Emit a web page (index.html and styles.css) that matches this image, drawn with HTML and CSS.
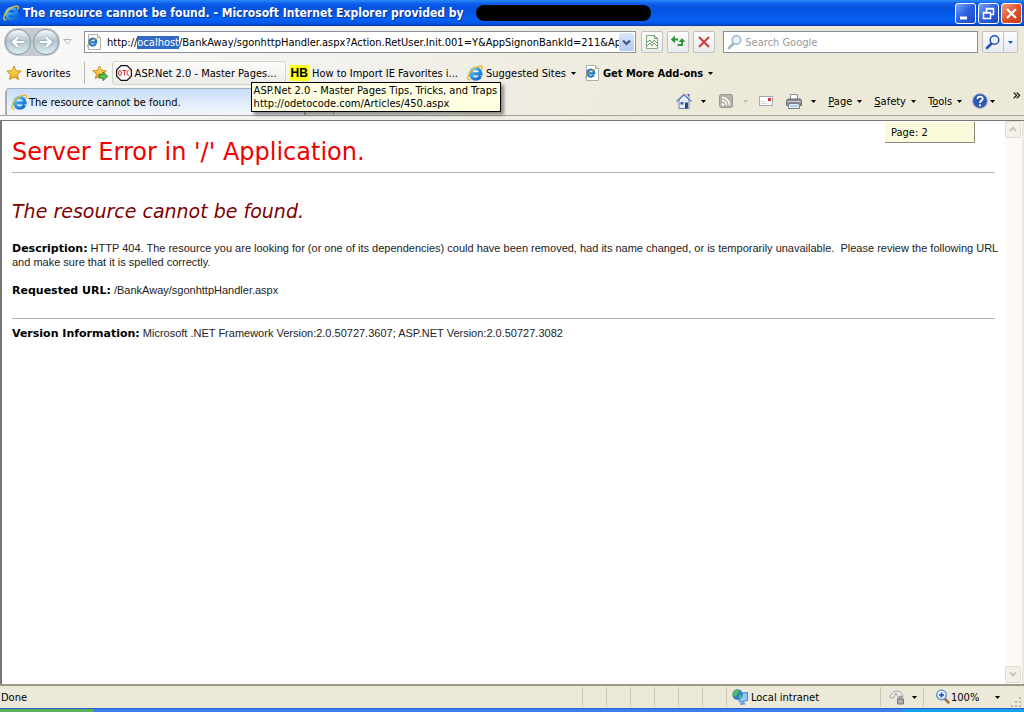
FILE: index.html
```html
<!DOCTYPE html>
<html lang="en">
<head>
    <meta charset="UTF-8">
    <meta name="viewport" content="width=device-width, initial-scale=1.0">
    <title>The resource cannot be found.</title>
    <link rel="stylesheet" href="styles.css">
</head>
<body>
    <!-- Shared icons -->
    <svg class="sprite" aria-hidden="true">
        <linearGradient id="blue" x1="0" y1="0" x2="1" y2="1">
            <stop offset="0" stop-color="#6fd0fc"/>
            <stop offset="0.500" stop-color="#2c93e6"/>
            <stop offset="1" stop-color="#1264c8"/>
        </linearGradient>
        <linearGradient id="gold" x1="0" y1="0" x2="0" y2="1">
            <stop offset="0" stop-color="#ffe96a"/>
            <stop offset="1" stop-color="#eda41c"/>
        </linearGradient>
        <linearGradient id="glass" x1="0" y1="0" x2="0" y2="1">
            <stop offset="0" stop-color="#ffffff"/>
            <stop offset="1" stop-color="#cfe8fb"/>
        </linearGradient>
        <symbol id="ie" viewBox="0 0 16 16">
            <path d="M13.500 11A5.300 5.300 0 1 1 14 8.800H5" fill="none" stroke="url(#blue)" stroke-width="3.200"/>
            <path d="M3.500 14.800C-1 15.500.2 9.500 5.500 4.800 9.500 1.200 15 .2 15.300 2.200c.1.800-.2 1.500-.6 2.200" fill="none" stroke="#f2b824" stroke-width="1.400"/>
        </symbol>
        <symbol id="page-ie" viewBox="0 0 16 16">
            <path d="M2.500.5h9l3 3v12h-12z" fill="#fff" stroke="#b0b0aa"/>
            <path d="M11.500.5v3h3" fill="#e4e4e0" stroke="#b0b0aa"/>
            <path d="M9.800 10A3.500 3.500 0 1 1 10.300 8.400H4" fill="none" stroke="#1f78d0" stroke-width="2.200"/>
            <path d="M2 13.300c-1.700-1 1.500-5.500 4.500-7.300 2.500-1.500 4.800-2 4.500-.5" fill="none" stroke="#e0a528"/>
        </symbol>
        <symbol id="star" viewBox="0 0 16 16">
            <path d="M8 1l2.100 4.700 5.100.5-3.900 3.400 1.200 5L8 12l-4.500 2.600 1.200-5L.8 6.200l5.100-.5z" fill="url(#gold)" stroke="#c98e1c"/>
        </symbol>
        <symbol id="lens" viewBox="0 0 16 16">
            <path d="M6.500 9.500L2 14" stroke="currentColor" stroke-width="2.500" stroke-linecap="round"/>
            <circle cx="9.500" cy="6" r="4.300" fill="#e8f4ff" stroke="currentColor" stroke-width="1.500"/>
        </symbol>
        <symbol id="down" viewBox="0 0 5 3">
            <path d="M0 0h5L2.500 3z" fill="currentColor"/>
        </symbol>
    </svg>

    <header class="titlebar">
        <svg class="icon"><use href="#ie"/></svg>
        <h1 class="window-title">The resource cannot be found. - Microsoft Internet Explorer provided by</h1>
        <span class="redacted"></span>
        <div class="window-buttons">
            <button class="window-button" aria-label="Minimize">
                <svg viewBox="0 0 19 19"><path d="M4 14h7" stroke="#fff" stroke-width="3"/></svg>
            </button>
            <button class="window-button" aria-label="Restore">
                <svg viewBox="0 0 19 19"><path d="M7.500 8V4.500h7v6H12M7 5h8" fill="none" stroke="#fff" stroke-width="1.500"/><path d="M4.500 8.500h7v6h-7zM4 9h8" fill="none" stroke="#fff" stroke-width="1.500"/></svg>
            </button>
            <button class="window-button close" aria-label="Close">
                <svg viewBox="0 0 19 19"><path d="M5 5l9 9M14 5l-9 9" stroke="#fff" stroke-width="2.200"/></svg>
            </button>
        </div>
    </header>

    <div class="toolbars">
        <div class="address-row">
            <div class="travel">
                <button class="round" aria-label="Back">
                    <svg viewBox="0 0 24 24"><path d="M20 12H6M12 5.500L5.500 12l6.500 6.500" fill="none" stroke="#8a9eac" stroke-width="5.500"/><path d="M20 12H6M12 5.500L5.500 12l6.500 6.500" fill="none" stroke="#fff" stroke-width="3.500"/></svg>
                </button>
                <button class="round" aria-label="Forward">
                    <svg viewBox="0 0 24 24"><path d="M4 12h14M12 5.500l6.500 6.500-6.500 6.500" fill="none" stroke="#8a9eac" stroke-width="5.500"/><path d="M4 12h14M12 5.500l6.500 6.500-6.500 6.500" fill="none" stroke="#fff" stroke-width="3.500"/></svg>
                </button>
            </div>
            <button class="plain recent" aria-label="Recent pages">
                <svg viewBox="0 0 9 6"><path d="M.8.5h7.400L4.500 5z" fill="#fff" stroke="#b0b0b4"/></svg>
            </button>
            <div class="field address">
                <svg class="icon"><use href="#page-ie"/></svg>
                <input id="address" type="text" aria-label="Address" value="http://ocalhost/BankAway/sgonhttpHandler.aspx?Action.RetUser.Init.001=Y&amp;AppSignonBankId=211&amp;Ap">
                <button class="drop" aria-label="Show address list">
                    <svg viewBox="0 0 9 7"><path d="M1 1.500l3.500 3.500L8 1.500" fill="none" stroke="#3b5688" stroke-width="2.200"/></svg>
                </button>
            </div>
            <button class="tool" aria-label="Compatibility View">
                <svg class="icon" viewBox="0 0 16 16"><path d="M2.500 1.500h8l3 3v10h-11z" fill="#f4faf2" stroke="#82a886"/><path d="M10.500 1.500v3h3M3 8l3-2 2 3 2-3 3 3M3 12l3-3 2 3 2-3 3 3" fill="none" stroke="#6d9c72"/></svg>
            </button>
            <button class="tool" aria-label="Refresh">
                <svg class="icon" viewBox="0 0 16 16"><path d="M8 5.500H4M12 7v4H7.500" fill="none" stroke="#2f9535" stroke-width="2"/><path d="M5 1.500L.8 5.500 5 9.500zM8.500 8L12 4l3.500 4z" fill="#2f9535"/></svg>
            </button>
            <button class="tool" aria-label="Stop">
                <svg class="icon" viewBox="0 0 16 16"><path d="M3 3l10 10M13 3L3 13" stroke="#d43f43" stroke-width="2.200"/></svg>
            </button>
            <div class="field search">
                <svg class="icon lens-pale"><use href="#lens"/></svg>
                <input type="text" aria-label="Search" placeholder="Search Google">
            </div>
            <div class="search-buttons">
                <button aria-label="Search"><svg class="icon"><use href="#lens"/></svg></button>
                <button aria-label="Search options"><svg class="arrow"><use href="#down"/></svg></button>
            </div>
        </div>

        <nav class="favorites-row">
            <button class="plain favorites">
                <svg class="icon"><use href="#star"/></svg>Favorites
            </button>
            <button class="plain add-favorite" aria-label="Add to Favorites Bar">
                <svg class="icon" viewBox="0 0 16 16"><use href="#star" width="15" height="15"/><path d="M7 9.500h4V7l4.700 4.300L11 15.500V13H7z" fill="#5fc44d" stroke="#27802a"/></svg>
            </button>
            <a class="link hovered" href="#">
                <svg class="icon" viewBox="0 0 16 16"><path d="M5 .6h6L15.400 5v6L11 15.400H5L.6 11V5z" fill="#fff" stroke="#111" stroke-width="1.200"/><g fill="none" stroke="#c33"><ellipse cx="4" cy="8" rx="1.400" ry="2.500"/><path d="M6.500 5.500h4M8.500 5.500v5M13.500 5.800c-2-.8-2.500.5-2.500 2.200s.5 3 2.500 2.200"/></g></svg>
                ASP.Net 2.0 - Master Pages...
                <span class="tooltip">ASP.Net 2.0 - Master Pages Tips, Tricks, and Traps<br>http://odetocode.com/Articles/450.aspx</span>
            </a>
            <a class="link" href="#"><b class="hb">HB</b>How to Import IE Favorites i...</a>
            <a class="link suggested" href="#"><svg class="icon"><use href="#ie"/></svg>Suggested Sites<svg class="arrow"><use href="#down"/></svg></a>
            <a class="link more" href="#"><svg class="icon"><use href="#page-ie"/></svg>Get More Add-ons<svg class="arrow"><use href="#down"/></svg></a>
        </nav>

        <div class="tab-row">
            <span class="quick-tab"></span>
            <button class="tab"><svg class="icon"><use href="#ie"/></svg>The resource cannot be found.</button>
            <button class="new-tab" aria-label="New Tab"></button>
            <div class="commands">
                <button class="plain home" aria-label="Home">
                    <svg class="icon" viewBox="0 0 16 16"><path d="M3 7v8.500h10V7L8 2z" fill="#e6edf8" stroke="#6d7fa8"/><path d="M11 1h2.500v4" fill="#465c9c"/><path d="M.5 8.500L8 1.500l7.500 7" fill="none" stroke="#6f84b8" stroke-width="1.500"/><path d="M4.500 9h3v2.500h-3z" fill="#3c5fae"/><path d="M9 9.500h3v6H9z" fill="#294887"/></svg>
                    <svg class="arrow"><use href="#down"/></svg>
                </button>
                <button class="plain feeds" aria-label="Feeds" disabled>
                    <svg class="icon" viewBox="0 0 16 16"><rect x="1.500" y="1.500" width="13" height="13" rx="2" fill="#b5b3aa" stroke="#97958d"/><circle cx="5" cy="11.500" r="1.300" fill="#fff"/><path d="M4 7.500a4.500 4.500 0 0 1 4.500 4.500M4 4.500a7.500 7.500 0 0 1 7.500 7.500" fill="none" stroke="#fff" stroke-width="1.500"/></svg>
                    <svg class="arrow"><use href="#down"/></svg>
                </button>
                <button class="plain mail" aria-label="Read mail">
                    <svg class="icon" viewBox="0 0 16 16"><path d="M1.500 3.500h13v9h-13z" fill="#fbfbfb" stroke="#a6a6ac"/><path d="M3 10.500h6M3 8.500h4" stroke="#d5d5da"/><path d="M10 5h3v3h-3z" fill="#d0393b"/></svg>
                </button>
                <button class="plain print" aria-label="Print">
                    <svg class="icon" viewBox="0 0 16 16"><path d="M4.500 7V1.500h7V7" fill="#fff" stroke="#8a8e98"/><path d="M1.500 6h13l1 2v4.500H.5V8z" fill="#888c96" stroke="#686c76"/><path d="M1 8.500h14" stroke="#c8cad0"/><path d="M2.500 12.500l1-2h9l1 2v3h-11z" fill="#e8f0fa" stroke="#777b86"/><path d="M4 13h8" stroke="#7da1d4"/></svg>
                    <svg class="arrow"><use href="#down"/></svg>
                </button>
                <button class="plain"><span><u>P</u>age</span><svg class="arrow"><use href="#down"/></svg></button>
                <button class="plain"><span><u>S</u>afety</span><svg class="arrow"><use href="#down"/></svg></button>
                <button class="plain"><span>T<u>o</u>ols</span><svg class="arrow"><use href="#down"/></svg></button>
                <button class="plain help" aria-label="Help">
                    <svg class="icon" viewBox="0 0 16 16"><circle cx="8" cy="8" r="7.300" fill="#2f58b4" stroke="#98a8c8"/><path d="M5.500 6c0-3.200 5.200-3.200 5.200-.2C10.700 7.600 8 7.500 8 10" fill="none" stroke="#fff" stroke-width="1.800"/><circle cx="8" cy="12.300" r="1.100" fill="#fff"/></svg>
                    <svg class="arrow"><use href="#down"/></svg>
                </button>
            </div>
            <button class="plain chevron" aria-label="More commands">»</button>
        </div>
    </div>

    <div class="viewport">
        <main class="document">
            <h2 class="server-error">Server Error in '/' Application.</h2>
            <hr>
            <h3 class="error-name">The resource cannot be found.</h3>
            <p><b>Description:</b> HTTP 404. The resource you are looking for (or one of its dependencies) could have been removed, had its name changed, or is temporarily unavailable. &nbsp;Please review the following URL and make sure that it is spelled correctly.</p>
            <p><b>Requested URL:</b> /BankAway/sgonhttpHandler.aspx</p>
            <hr class="version-rule">
            <p><b>Version Information:</b> Microsoft .NET Framework Version:2.0.50727.3607; ASP.NET Version:2.0.50727.3082</p>
        </main>
        <div class="page-tag">Page: 2</div>
        <div class="scrollbar">
            <button aria-label="Scroll up" disabled><svg viewBox="0 0 9 7"><path d="M1 5.500L4.500 2 8 5.500" fill="none" stroke="#c4c3ba" stroke-width="2"/></svg></button>
            <button aria-label="Scroll down" disabled><svg viewBox="0 0 9 7"><path d="M1 1.500L4.500 5 8 1.500" fill="none" stroke="#c4c3ba" stroke-width="2"/></svg></button>
        </div>
    </div>

    <footer class="statusbar">
        <span class="status-text">Done</span>
        <span class="cell"></span>
        <span class="cell"></span>
        <span class="cell"></span>
        <span class="cell"></span>
        <span class="cell"></span>
        <span class="cell"></span>
        <span class="cell zone">
            <svg class="icon" viewBox="0 0 16 16"><path d="M5.500 4.500l10-1v8l-8 1.500z" fill="#8fc8fa" stroke="#4a86d0"/><path d="M8 15l5-.5M11 12.500V15" stroke="#6f9cd8" stroke-width="2"/><circle cx="5.500" cy="5.500" r="5.200" fill="#2a7ad8"/><path d="M1.500 2.500c2-2.500 6-2 5.500 0S5 4.500 5 5.500 3 8.500 2 7.500 0 4.500 1.500 2.500zM7 6c2-1 3 0 2.500 2S7 10 6.500 9z" fill="#4fc058"/></svg>
            Local intranet
        </span>
        <button class="cell protected" aria-label="Protected Mode">
            <svg class="icon" viewBox="0 0 16 16"><path d="M.8 8.500C2 5 4 2.500 7.500 2c4 0 6 2.500 6.500 5.500L9.500 9 7 4 4.500 9z" fill="#eee" stroke="#a4a4a4"/><path d="M8.500 10h6v5h-6z" fill="#b0b0b0" stroke="#777"/><path d="M10 10V8.500c0-2 3-2 3 0V10" fill="none" stroke="#777"/></svg>
            <svg class="arrow"><use href="#down"/></svg>
        </button>
        <button class="cell zoom">
            <svg class="icon" viewBox="0 0 16 16"><path d="M9.500 9.500l4 4" stroke="#9a7650" stroke-width="2.500" stroke-linecap="round"/><circle cx="6.500" cy="6" r="4.800" fill="url(#glass)" stroke="#4e8cd8" stroke-width="1.300"/><path d="M6.500 3.500v5M4 6h5" stroke="#1f54b0" stroke-width="1.700"/></svg>
            100%
            <svg class="arrow"><use href="#down"/></svg>
        </button>
        <svg class="grip" viewBox="0 0 12 12"><path d="M9 1h2v2H9zM5 5h2v2H5zM9 5h2v2H9zM1 9h2v2H1zM5 9h2v2H5zM9 9h2v2H9z" fill="#bdb9a6"/></svg>
    </footer>
    <div class="taskbar"><span class="start"></span><span class="tray"></span></div>

    <script>
        // Highlight the host name in the address box
        const address = document.getElementById('address');
        address.focus();
        address.setSelectionRange(7, 15);
        address.scrollLeft = 0;
    </script>
</body>
</html>
```
FILE: styles.css
```css
* {
    box-sizing: border-box;
}

body {
    margin: 0;
    height: 100vh;
    display: flex;
    flex-direction: column;
    font-family: "DejaVu Sans Condensed", "DejaVu Sans", Tahoma, sans-serif;
    font-size: 11px;
    line-height: 13px;
    color: #000;
    background: #fff;
    overflow: hidden;
}

button, input {
    font: inherit;
    color: inherit;
    padding: 0;
    margin: 0;
}

svg {
    display: block;
    flex: none;
}

.sprite {
    position: absolute;
    width: 0;
    height: 0;
}

.icon {
    width: 16px;
    height: 16px;
}

.arrow {
    width: 5px;
    height: 3px;
}

.plain {
    display: flex;
    align-items: center;
    border: none;
    background: none;
}

/* Title bar */
.titlebar {
    display: flex;
    align-items: center;
    height: 26px;
    padding: 0 2px 0 3px;
    color: #fff;
    background: linear-gradient(#2a8af8 0, #0a5be8 4px, #0453e0 10px, #0560f4 20px, #0458ea 23px, #0238b0 26px);
}

.window-title {
    margin: 0 12px 0 4px;
    font-size: 12px;
    line-height: 16px;
    font-weight: bold;
    white-space: nowrap;
    text-shadow: 1px 1px #0a2f8a;
}

.redacted {
    width: 175px;
    height: 16px;
    border-radius: 8px;
    background: #000;
}

.window-buttons {
    display: flex;
    gap: 2px;
    margin-left: auto;
}

.window-button {
    width: 21px;
    height: 21px;
    border: 1px solid #fff;
    border-radius: 3px;
    background: linear-gradient(135deg, #7ca4f4, #2a5fe0 50%, #1c49c4);
}

.window-button.close {
    background: linear-gradient(135deg, #f0a080, #e0522c 50%, #c03a14);
}

/* Toolbars */
.toolbars {
    padding-bottom: 4px;
    border-bottom: 1px solid #777;
    background: linear-gradient(100deg, #f8f8f8, #f2f1ec 35%, #ece9d8 70%);
}

.address-row {
    display: flex;
    align-items: center;
    height: 32px;
    padding: 0 6px 0 4px;
}

.travel {
    display: flex;
    gap: 2px;
    padding: 1px;
    border-radius: 14px;
    background: #c3c9ce;
}

.round {
    width: 26px;
    height: 26px;
    padding: 3px;
    border: 1px solid #8c99a4;
    border-radius: 50%;
    background: linear-gradient(#f6f9fb, #b4c4ce 45%, #dceef5);
}

.recent {
    width: 9px;
    margin: 0 12px 0 3px;
}

.field {
    display: flex;
    align-items: center;
    height: 22px;
    min-width: 0;
    border: 1px solid #8a9098;
    background: #fff;
}

.field input {
    flex: 1;
    min-width: 0;
    border: none;
    outline: none;
    background: none;
}

.field input::selection {
    color: #fff;
    background: #316ac5;
}

.address {
    flex: 11 1 0;
    margin-right: 5px;
    padding-left: 1px;
}

.address input {
    padding-left: 5px;
}

.drop {
    width: 15px;
    height: 18px;
    margin-right: 1px;
    padding: 0 3px;
    border: none;
    border-radius: 2px;
    background: linear-gradient(#dce6fc, #b4c8f4);
}

.tool {
    display: flex;
    align-items: center;
    justify-content: center;
    width: 22px;
    height: 22px;
    margin-right: 4px;
    border: 1px solid #c0c2c6;
    border-radius: 2px;
    background: linear-gradient(#fdfdfd, #e9ebee);
}

.search {
    flex: 5 1 0;
    margin: 0 4px;
    padding-left: 3px;
    gap: 2px;
}

.search input::placeholder {
    color: #9a9a9a;
    opacity: 1;
}

.lens-pale {
    color: #9db4c8;
}

.search-buttons {
    display: flex;
    height: 22px;
    border: 1px solid #c0c2c6;
    border-radius: 2px;
    color: #2450b8;
    background: linear-gradient(#fdfdfd, #e6e9f0);
}

.search-buttons button {
    padding: 0 2px;
    border: none;
    background: none;
}

.search-buttons button + button {
    padding: 0 4px;
    border-left: 1px solid #c0c2c6;
}

/* Favorites bar */
.favorites-row {
    display: flex;
    align-items: center;
    height: 30px;
    white-space: nowrap;
}

.favorites {
    gap: 4px;
    height: 22px;
    padding: 0 13px 0 6px;
    border-right: 1px solid #b8b8b4;
}

.add-favorite {
    margin: 0 4px 0 7px;
}

.link {
    display: flex;
    align-items: center;
    gap: 3px;
    height: 24px;
    padding-left: 4px;
    color: #000;
    text-decoration: none;
}

.link .arrow {
    margin-left: 2px;
}

.hovered {
    position: relative;
    padding: 0 8px 0 3px;
    border: 1px solid #d4d3cc;
    border-radius: 3px;
    background: linear-gradient(#fcfcfa, #ecebe6);
}

.tooltip {
    position: absolute;
    z-index: 2;
    left: 138px;
    top: 20px;
    padding: 1px 3px 1px 2px;
    border: 1px solid #000;
    background: #ffffe1;
    box-shadow: 3px 3px 3px rgba(0, 0, 0, 0.4);
}

.hb {
    padding: 0 1px;
    font-family: "Liberation Sans", Arial, sans-serif;
    font-size: 12px;
    line-height: 16px;
    background: #ffff20;
}

.suggested {
    margin-left: 5px;
}

.more {
    margin-left: 4px;
    font-weight: bold;
}

/* Tabs and command bar */
.tab-row {
    display: flex;
    align-items: flex-end;
    height: 28px;
    border-bottom: 1px solid #a5a5a0;
}

.quick-tab {
    width: 6px;
    height: 24px;
    border-right: 1px solid #aab0b8;
}

.tab {
    display: flex;
    align-items: center;
    gap: 2px;
    flex: 0 1 299px;
    height: 27px;
    padding: 0 4px;
    border: 1px solid #a5adb8;
    border-bottom: none;
    border-radius: 3px 3px 0 0;
    background: linear-gradient(#c6dcf8, #dfebfa 50%, #f4f7fa);
    white-space: nowrap;
}

.new-tab {
    width: 29px;
    height: 24px;
    border: 1px solid #b8b8b4;
    border-bottom: none;
    border-radius: 3px 3px 0 0;
    background: #eeede6;
}

.commands {
    display: flex;
    align-items: center;
    height: 28px;
    margin-left: auto;
}

.commands .plain {
    gap: 5px;
    margin-right: 12px;
}

.commands .home {
    gap: 9px;
}

.commands .feeds {
    gap: 9px;
    color: #bdbab0;
    margin-right: 10px;
}

.commands .print {
    gap: 9px;
}

.commands .help {
    gap: 2px;
    margin: 0 17px 0 -2px;
}

.chevron {
    align-self: flex-start;
    padding-right: 3px;
    font-size: 16px;
}

/* Page */
.viewport {
    position: relative;
    display: flex;
    flex: 1;
    min-height: 0;
    border-left: 2px solid #777;
    border-right: 2px solid #ece9d8;
}

.document {
    flex: 1;
    padding: 16px 4px 0 10px;
    font-family: "Liberation Sans", Arial, sans-serif;
    line-height: 14px;
    color: #222;
}

.document b {
    font-family: "DejaVu Sans", Verdana, sans-serif;
    line-height: 11px;
    color: #000;
}

.document p {
    margin: 0 0 14px;
}

.document hr {
    height: 1px;
    margin: 0 6px 0 0;
    border: none;
    background: #b4b4b4;
}

.server-error, .error-name {
    margin: 0;
    font-family: "DejaVu Sans", Verdana, sans-serif;
    font-weight: normal;
}

.server-error {
    padding-bottom: 5px;
    font-size: 24px;
    line-height: 30px;
    color: #f00000;
}

.error-name {
    margin: 26px 0 18px;
    font-size: 19px;
    line-height: 24px;
    font-style: italic;
    color: #800000;
}

.document .version-rule {
    margin: 21px 6px 7px 0;
}

.page-tag {
    position: absolute;
    top: 1px;
    right: 47px;
    width: 90px;
    padding: 4px 6px 3px;
    border-right: 1px solid #8a8878;
    border-bottom: 1px solid #8a8878;
    background: #fbfbdc;
}

.scrollbar {
    display: flex;
    flex-direction: column;
    justify-content: space-between;
    width: 17px;
    padding-bottom: 1px;
    background: #fbfaf7;
}

.scrollbar button {
    width: 16px;
    height: 17px;
    padding: 0 3px;
    border: 1px solid #dedcd0;
    border-radius: 2px;
    background: #f2f1ea;
}

/* Status bar */
.statusbar {
    display: flex;
    align-items: center;
    height: 24px;
    border-top: 2px solid #9a9888;
    background: #ece9d8;
}

.status-text {
    flex: 1;
    padding-left: 1px;
}

.cell {
    display: flex;
    align-items: center;
    width: 24px;
    height: 20px;
    border: none;
    border-left: 1px solid #cbc8b8;
    background: none;
    white-space: nowrap;
}

.zone {
    width: 154px;
    gap: 3px;
    padding-left: 5px;
}

.protected {
    width: 43px;
    gap: 7px;
    padding-left: 8px;
}

.zoom {
    width: 87px;
    padding: 0 10px 0 11px;
}

.zoom .arrow {
    margin-left: auto;
}

.grip {
    width: 12px;
    height: 12px;
    margin-right: 2px;
    align-self: flex-end;
}

.taskbar {
    display: flex;
    justify-content: space-between;
    height: 4px;
    border-top: 1px solid #2a60c8;
    background: #3d80f0;
}

.start {
    width: 94px;
    background: #5cb05c;
}

.tray {
    width: 121px;
    background: #18a0f0;
}
```
